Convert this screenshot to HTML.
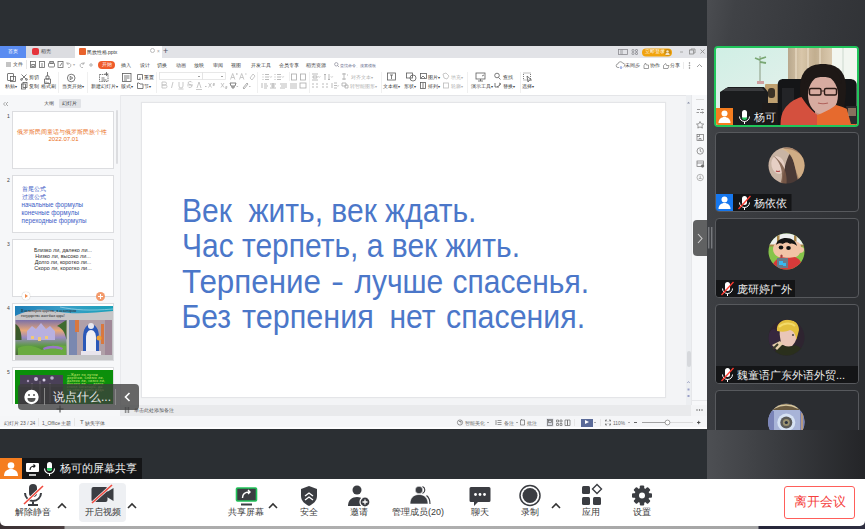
<!DOCTYPE html>
<html><head><meta charset="utf-8">
<style>
*{margin:0;padding:0;box-sizing:border-box}
html,body{width:865px;height:529px;overflow:hidden;background:#2b2f33;font-family:"Liberation Sans",sans-serif;position:relative}
.a{position:absolute}
.L{position:absolute;font-size:4.7px;line-height:7px;color:#3a3a3a;white-space:nowrap}
.G{color:#b0b0b0}
.sv{position:absolute;overflow:visible}
/* WPS window */
#wps{left:0;top:46px;width:707px;height:383px;background:#f3f4f6;overflow:hidden}
#tabs{left:0;top:0;width:707px;height:11.5px;background:#e2e3e7}
#qrow{left:0;top:11.5px;width:707px;height:12.5px;background:#fff}
#ribbon{left:0;top:24px;width:707px;height:25.5px;background:#fff;border-bottom:1px solid #e4e5e8}
#leftp{left:0;top:49px;width:121px;height:321px;background:#f6f7f9;border-right:1px solid #e8e9ec;overflow:hidden}
#thumbs{left:0;top:0;width:120px;height:309px;overflow:hidden}
.thumb{position:absolute;left:12px;width:102px;height:58px;background:#fff;border:1px solid #dcdde0}
.tn{position:absolute;left:7px;font-size:5px;line-height:5px;color:#444}
#slide{left:142px;top:57px;width:522.5px;height:294px;background:#fff;box-shadow:0 0 1px 1px #e4e5e8}
#vscroll{left:686px;top:49px;width:5px;height:310px;background:#eceef1}
#rside{left:691px;top:49px;width:16px;height:310px;background:#f7f8fa;border-left:1px solid #e6e7ea}
#notes{left:121px;top:359px;width:570px;height:11px;background:#e9eaec}
#status{left:0;top:370px;width:707px;height:11px;background:#f5f6f8}
#wpsb{left:0;top:381px;width:707px;height:2px;background:#fdfdfe}
.sl{position:absolute;font-size:30px;line-height:30px;color:#4b77c9;white-space:pre;transform-origin:0 0}
.sep{position:absolute;width:1px;background:#e6e6e6}
/* right panel */
#rpanel{left:707px;top:0;width:158px;height:479px;background:linear-gradient(100deg,#4b4d51 0,#404246 12%,#35373b 50%,#2a2c2f 100%)}
.tile{position:absolute;left:8px;width:144px;height:80px;background:#2b2d31;border:1px solid #57595d;border-radius:4px;overflow:hidden}
.lbl{position:absolute;bottom:1px;height:17px;background:#141517;color:#fff;font-size:12px;line-height:17px;white-space:nowrap}
/* bottom */
#shareLbl{left:0;top:458px;width:142px;height:21px;background:#141517}
#toolbar{left:0;top:479px;width:865px;height:46.5px;background:#fff;border-radius:0 0 5px 5px}
#bstrip{left:0;top:515px;width:865px;height:14px;background:linear-gradient(90deg,#3b3133 0,#4a3e40 64px,#a9a9a9 65px,#b0b0b0 400px,#a4a4a4 758px,#26263a 759px,#2e2e40 865px)}
.tbl{position:absolute;top:506px;font-size:9px;line-height:12px;color:#3a3a3a;white-space:nowrap;text-align:center}
</style></head><body>

<div id="wps" class="a">
  <!-- tab bar -->
  <div id="tabs" class="a">
    <div class="a" style="left:0;top:0;width:26px;height:11.5px;background:#5a8cf1"></div>
    <div class="L" style="left:8px;top:2px;color:#fff">首页</div>
    <div class="a" style="left:26px;top:0;width:49px;height:11.5px;background:#dcdde1"></div>
    <div class="a" style="left:32px;top:2px;width:7px;height:7px;border-radius:2px;background:#e5343b"></div>
    <div class="L" style="left:41px;top:2px">稻壳</div>
    <div class="a" style="left:75px;top:0;width:87px;height:11.5px;background:#fff"></div>
    <div class="a" style="left:79px;top:2px;width:7px;height:7px;border-radius:1px;background:#e8622c"></div>
    <div class="L" style="left:86.5px;top:2.5px;color:#333;font-size:5px">民族性格.pptx</div>
    <div class="a" style="left:150px;top:2px;width:5px;height:5px;border:1px solid #bbb;border-radius:50%"></div>
    <div class="L" style="left:157px;top:2px;color:#999">×</div>
    <div class="L" style="left:163px;top:1px;font-size:9px;line-height:9px;color:#556">+</div>
    <!-- right side of tab bar -->
    <svg class="sv" style="left:610px;top:0" width="97" height="11" viewBox="0 0 97 11" fill="none" stroke="#8a8a90" stroke-width="0.8">
      <rect x="8.5" y="3.5" width="9" height="5"/><path d="M12 3.5v5M10 5h1M10 7h1" />
      <rect x="22" y="3.5" width="2" height="2" rx="0.5"/><rect x="25.5" y="3.5" width="2" height="2" rx="0.5"/><rect x="22" y="6.5" width="2" height="2" rx="0.5"/><rect x="25.5" y="6.5" width="2" height="2" rx="0.5"/>
      <rect x="32" y="2.4" width="30" height="8" rx="4" fill="#f1a30c" stroke="none"/>
      <circle cx="57.5" cy="6.4" r="3.3" fill="#c98a12" stroke="none"/>
      <circle cx="57.5" cy="5.4" r="1.2" fill="#f4e6c8" stroke="none"/>
      <path d="M55.3 9c0-1.5 1-2.2 2.2-2.2s2.2 0.7 2.2 2.2z" fill="#f4e6c8" stroke="none"/>
      <path d="M70 6h3" stroke="#999"/>
      <rect x="79.5" y="4" width="4" height="4" stroke="#888"/><path d="M81 4v-1h4v4h-1" stroke="#888"/>
      <path d="M90.5 3.5l4 4M94.5 3.5l-4 4" stroke="#888"/>
    </svg>
    <div class="L" style="left:645px;top:2.5px;color:#fff;font-size:4.8px;line-height:6px">立即登录</div>
  </div>
  <!-- quick row -->
  <div id="qrow" class="a">
    <div class="a" style="left:6px;top:4px;width:5px;height:5px;background:#c4c4c4"></div>
    <div class="L" style="left:13px;top:3px;color:#333">文件</div>
    <div class="sep" style="left:26px;top:2px;height:9px"></div>
    <svg class="sv" style="left:30px;top:3px" width="65" height="8" viewBox="0 0 65 8" fill="none" stroke="#666" stroke-width="0.8">
      <rect x="0.5" y="0.5" width="5" height="6"/><rect x="1.8" y="3.5" width="2.5" height="2"/>
      <rect x="9.5" y="0.5" width="5" height="6"/><path d="M11 3h2M11 5h2"/>
      <rect x="18.5" y="2" width="6" height="4" rx="1"/><rect x="19.8" y="0.5" width="3.5" height="2"/>
      <rect x="28" y="0.5" width="5" height="6"/><path d="M30 5l2-3"/>
      <path d="M37 3a2.2 2.2 0 1 1 1 3.5M37 1v2h2" stroke="#aaa"/>
      <path d="M54 3a2.2 2.2 0 1 0 -1 3.5M54 1v2h-2" stroke="#aaa"/>
      <circle cx="61" cy="4" r="1.2" stroke="#999"/>
    </svg>
    <div class="L G" style="left:73px;top:3px;font-size:4px">▾</div>
    <div class="a" style="left:98px;top:3.5px;width:16.5px;height:7.5px;border-radius:4px;background:#ef5b2a"></div>
    <div class="L" style="left:101.5px;top:3.5px;color:#fff">开始</div>
    <div class="L" style="left:120.5px;top:4px">插入</div>
    <div class="L" style="left:139.5px;top:4px">设计</div>
    <div class="L" style="left:157px;top:4px">切换</div>
    <div class="L" style="left:176px;top:4px">动画</div>
    <div class="L" style="left:194px;top:4px">放映</div>
    <div class="L" style="left:212.5px;top:4px">审阅</div>
    <div class="L" style="left:231px;top:4px">视图</div>
    <div class="L" style="left:250.5px;top:4px">开发工具</div>
    <div class="L" style="left:279px;top:4px">会员专享</div>
    <div class="L" style="left:305.5px;top:4px">稻壳资源</div>
    <svg class="sv" style="left:333.5px;top:4.5px" width="6" height="6"><circle cx="2.3" cy="2.3" r="1.7" stroke="#778" stroke-width="0.6" fill="none"/><path d="M3.5 3.5l1.5 1.5" stroke="#778" stroke-width="0.6"/></svg>
    <div class="L" style="left:340px;top:4px;color:#6a7090;font-size:4.4px">查找命令、搜索模板</div>
    <svg class="sv" style="left:615px;top:2px" width="92" height="10" viewBox="0 0 92 10" fill="none" stroke="#777" stroke-width="0.7">
      <path d="M4 7.5h-1a1.8 1.8 0 0 1 0-3.6a2.5 2.5 0 0 1 4.8-0.6a1.8 1.8 0 0 1 0.8 3.5"/><path d="M6 6v2.5M5 7.5l1 1l1-1" stroke="#4a6ad0"/>
      <path d="M29 8.5v-3l1.5-2.5l0.8 2h2.2v3.5z"/>
      <path d="M48.5 8.5h4.5l1-3h-2.5l-0.8-2l-2.2 2z"/>
      <path d="M68.5 2v7" stroke="#e2e2e2"/>
      <circle cx="74.5" cy="3" r="0.45"/><circle cx="74.5" cy="5.5" r="0.45"/><circle cx="74.5" cy="8" r="0.45"/>
      <path d="M82 7l2.5-2.5l2.5 2.5"/>
    </svg>
    <div class="L" style="left:624.5px;top:4px;font-size:4.8px">未同步</div>
    <div class="L" style="left:650px;top:4px;font-size:4.8px">协作</div>
    <div class="L" style="left:670px;top:4px;font-size:4.8px">分享</div>
  </div>
  <!-- ribbon -->
  <div id="ribbon" class="a">
    <svg class="sv" style="left:0;top:0" width="707" height="25" viewBox="0 0 707 25" fill="none" stroke="#5c5c5c" stroke-width="0.8">
      <!-- paste -->
      <rect x="7.5" y="3.5" width="6" height="7" rx="0.5"/><rect x="10.5" y="6.5" width="5" height="5"/>
      <!-- cut/copy -->
      <path d="M21.5 4.5l5 5M26.5 4.5l-5 5"/><circle cx="21.5" cy="9.5" r="0.9"/><circle cx="26.5" cy="9.5" r="0.9"/><rect x="21.5" y="14" width="4" height="5"/><rect x="23" y="12.5" width="4" height="5"/>
      <!-- brush -->
      <path d="M47.5 2v4M46 6h3v3h-3zM44.5 9h6v4.5h-6zM46 13.5v-2M48 13.5v-1.5"/>
      <!-- play -->
      <circle cx="71.2" cy="8" r="3.8"/><path d="M70.2 6.3v3.4l2.6-1.7z"/>
      <!-- new slide -->
      <rect x="99.5" y="4.5" width="8.5" height="7" stroke-dasharray="1.5 0.8"/><path d="M101.5 8h3M101.5 10h5M106.5 2v4M104.5 4h4"/>
      <!-- layout -->
      <rect x="122.5" y="3.5" width="8.5" height="8"/><path d="M124 6h5.5M124 8h5.5M124 10h3"/>
      <path d="M137.5 4.5h5v5M137.5 4.5v5h3M140 7.5v2"/><path d="M137.5 14v4.5h5.5v-4.5h-3l-1-1h-1.5z"/>
      <!-- font boxes -->
      <rect x="159.5" y="2.5" width="43" height="7" stroke="#e3e3e3"/>
      <rect x="202.5" y="2.5" width="23" height="7" stroke="#e3e3e3"/>
      <path d="M198 6l1 1l1-1M221 6l1 1l1-1" stroke="#888"/>
      <!-- font row2 -->
      <g stroke="#bbb"><path d="M162 12h3a1.3 1.3 0 0 1 0 3h-3zM162 15h3.5a1.5 1.5 0 0 1 0 3h-3.5z"/>
      <path d="M173 12l-1.5 6"/><path d="M179 12v4a2 2 0 0 0 4 0v-4M178.5 19h5"/>
      <path d="M192 12.5a2 1.5 0 1 0-2 2a2 1.5 0 1 1-2 2M187 15h6"/>
      <path d="M197 18l2-6l2 6M196 19.5h6"/>
      <path d="M208.5 13l3 4.5M211.5 13l-3 4.5M213 13.5h1.5v1h-1.5v1h1.5M221 13l3 4.5M224 13l-3 4.5M225.5 16.5h1.5v1h-1.5v1h1.5"/>
      <path d="M230.5 9.5l2.2-6l2.2 6M231.3 7.5h2.8M236 4h1.6M236.8 3.2v1.6M239.5 9.5l2.2-6l2.2 6M240.3 7.5h2.8M245 4h1.6"/>
      <path d="M250 8l3-4l2 2l-3 4z"/></g>
      <path d="M230 13h6l-1 3h-4zM232 16v2h2v-2" stroke="#666"/>
      <path d="M243 18l4-5l1 1l-4 5z" stroke="#999"/>
      <!-- separators -->
      <g stroke="#ececec"><path d="M58.5 2v21M87.5 2v21M156.5 2v21M257.5 2v21M289.5 2v9M309.5 2v21M381.5 2v21M467.5 2v21M520.5 2v21"/></g>
      <!-- lists -->
      <g stroke="#aaa"><path d="M263 4v1M263 6.5v1M263 9v1M265 4.5h4M265 7h4M265 9.5h4M270 6.5l0.8 0.8l0.8-0.8M282 6.5l0.8 0.8l0.8-0.8M318.5 6.5l0.8 0.8l0.8-0.8M331 6.5l0.8 0.8l0.8-0.8M337 15.5l0.8 0.8l0.8-0.8M205 16l0.8 0.8l0.8-0.8M236.5 16l0.8 0.8l0.8-0.8M249 16l0.8 0.8l0.8-0.8"/>
      <path d="M275 4v1M275 6.5v1M275 9v1M277 4.5h4M277 7h4M277 9.5h4"/>
      <rect x="291.5" y="4" width="5" height="6"/><rect x="300.5" y="4" width="5" height="6"/>
      <path d="M262 13v5M264 14h3M264 16h4M264 18h3"/>
      <path d="M273 13v5M270 14h6M271 16h4M270 18h6"/>
      <path d="M286 13v5M280 14h5M281 16h4M280 18h5"/>
      <path d="M290 14h7M290 16h7M290 18h7"/>
      <rect x="300" y="13" width="6" height="5"/>
      <path d="M312 4h6M312 10h6M313 6h4v2h-4z"/>
      <path d="M325 4v6M329 4v6M324 5l1-1l1 1M328 9l1 1l1-1"/>
      <path d="M312 14h2M316 14h2M312 17h2M316 17h2M322 14h2M326 14h2M322 17h2M326 17h2"/>
      <path d="M332 13v5M334 13h3M334 15.5h3M334 18h3"/>
      <path d="M344 3v7M342 4h4M342 9h4M347 5h1"/>
      <path d="M342 13h4v3h-4zM345 15h3v3h-3z"/></g>
      <!-- insert group -->
      <rect x="387.5" y="3" width="8" height="7"/><path d="M390 5h3M391.5 5v4"/>
      <rect x="406.5" y="3" width="6" height="5"/><circle cx="413" cy="8" r="3"/>
      <rect x="420.5" y="3.5" width="6" height="5"/><path d="M421 8l2-2l2 2"/>
      <rect x="420.5" y="12.5" width="5" height="6"/><path d="M423 13v5"/>
      <g stroke="#bbb"><path d="M443 4l3-1l3 3l-2 3l-3-1z"/><rect x="443.5" y="13" width="5" height="5"/></g>
      <rect x="476" y="3" width="9" height="6"/><path d="M480.5 9v2M478 11h5M482 6l2-1"/>
      <circle cx="497" cy="5.5" r="2.3"/><path d="M498.5 7.5l2 2"/>
      <path d="M495 13v4h4M499 13l2 1l-2 1M497 17l3-2"/>
      <rect x="523.5" y="3" width="7" height="7" stroke-dasharray="1 1"/><path d="M527 6l1 6l1.5-2l2 0z"/>
    </svg>
    <div class="L" style="left:5px;top:12.5px">粘贴<span style="font-size:4px">▾</span></div>
    <div class="L" style="left:28.5px;top:3.5px">剪切</div>
    <div class="L" style="left:28.5px;top:12.5px">复制</div>
    <div class="L" style="left:41px;top:12.5px">格式刷</div>
    <div class="L" style="left:62px;top:12.5px">当页开始<span style="font-size:4px">▾</span></div>
    <div class="L" style="left:91px;top:12.5px">新建幻灯片<span style="font-size:4px">▾</span></div>
    <div class="L" style="left:121px;top:12.5px">版式<span style="font-size:4px">▾</span></div>
    <div class="L" style="left:144px;top:4px">重置</div>
    <div class="L" style="left:144px;top:12.5px">节<span style="font-size:4px">▾</span></div>
    <div class="L G" style="left:351px;top:4px">对齐文本<span style="font-size:4px">▾</span></div>
    <div class="L G" style="left:350px;top:12.5px">转智能图形<span style="font-size:4px">▾</span></div>
    <div class="L" style="left:383px;top:12.5px">文本框<span style="font-size:4px">▾</span></div>
    <div class="L" style="left:404px;top:12.5px">形状<span style="font-size:4px">▾</span></div>
    <div class="L" style="left:428px;top:4px">图片<span style="font-size:4px">▾</span></div>
    <div class="L" style="left:428px;top:12.5px">排列<span style="font-size:4px">▾</span></div>
    <div class="L G" style="left:451px;top:4px">填充<span style="font-size:4px">▾</span></div>
    <div class="L G" style="left:451px;top:12.5px">轮廓<span style="font-size:4px">▾</span></div>
    <div class="L" style="left:471px;top:12.5px">演示工具<span style="font-size:4px">▾</span></div>
    <div class="L" style="left:503px;top:4px">查找</div>
    <div class="L" style="left:503px;top:12.5px">替换<span style="font-size:4px">▾</span></div>
    <div class="L" style="left:522px;top:12.5px">选择<span style="font-size:4px">▾</span></div>
  </div>
  <!-- left panel -->
  <div id="leftp" class="a">
    <svg class="sv" style="left:2px;top:6px" width="7" height="6"><path d="M3.5 1l-2 2l2 2M6 1l-2 2l2 2" stroke="#888" stroke-width="0.7" fill="none"/></svg>
    <div class="L" style="left:44px;top:5px;color:#555">大纲</div>
    <div class="a" style="left:59px;top:4px;width:22px;height:9px;background:#e1e3e7;border-radius:1px"></div>
    <div class="L" style="left:62px;top:5px;color:#333">幻灯片</div>
    <div class="a" style="left:116px;top:15px;width:2px;height:54px;background:#dcdde0;border-radius:1px"></div>
    <svg class="sv" style="left:56px;top:310px" width="8" height="8"><path d="M4 0.5v7M0.5 4h7" stroke="#3a3a3a" stroke-width="1"/></svg>
    <div id="thumbs" class="a">
    <div class="tn" style="top:19px">1</div>
    <div class="thumb" style="top:16px">
      <div class="L" style="left:3.8px;top:16px;color:#ea6e22;font-size:6.25px;font-weight:500">俄罗斯民间童话与俄罗斯民族个性</div>
      <div class="L" style="left:35.5px;top:23.5px;color:#ea6e22;font-size:6px">2022.07.01</div>
    </div>
    <div class="tn" style="top:83px">2</div>
    <div class="thumb" style="top:80px">
      <div class="L" style="left:8.5px;top:9px;color:#3d5cc6;font-size:6.3px;line-height:8px">首尾公式<br>过渡公式<br>начальные формулы<br>конечные формулы<br>переходные формулы</div>
    </div>
    <div class="tn" style="top:147px">3</div>
    <div class="thumb" style="top:144px">
      <div class="L" style="left:0;width:100px;text-align:center;top:6.5px;color:#2a2a2a;font-size:5.4px;line-height:6.05px">Близко ли, далеко ли...<br>Низко ли, высоко ли...<br>Долго ли, коротко ли...<br>Скоро ли, коротко ли...</div>
      <div class="a" style="left:8.5px;top:52px;width:8px;height:8px;border-radius:50%;background:#fff;box-shadow:0 0 1px #aaa"></div>
      <div class="a" style="left:11.5px;top:54px;width:0;height:0;border-left:3.5px solid #f08a4b;border-top:2px solid transparent;border-bottom:2px solid transparent"></div>
      <div class="a" style="left:82.5px;top:52px;width:9px;height:9px;border-radius:50%;background:#f39a6b"></div>
      <svg class="sv" style="left:82.5px;top:52px" width="9" height="9"><path d="M4.5 2v5M2 4.5h5" stroke="#fff" stroke-width="1.1"/></svg>
    </div>
    <div class="tn" style="top:211px">4</div>
    <div class="thumb" style="top:208px;background:#fff;overflow:hidden">
      <svg class="sv" style="left:1.5px;top:1.5px" width="98" height="55" viewBox="0 0 98 55">
        <defs>
          <linearGradient id="wave4" x1="0" y1="0" x2="1" y2="0"><stop offset="0" stop-color="#1e7fb8"/><stop offset="0.5" stop-color="#3a9fc8"/><stop offset="1" stop-color="#18a0b8"/></linearGradient>
          <linearGradient id="sky4" x1="0" y1="0" x2="0" y2="1"><stop offset="0" stop-color="#7a70a8"/><stop offset="0.3" stop-color="#e8a878"/><stop offset="0.5" stop-color="#9a8ac0"/><stop offset="0.75" stop-color="#5a9a40"/><stop offset="1" stop-color="#4a6a38"/></linearGradient>
        </defs>
        <rect width="98" height="55" fill="#c6c6c8"/>
        <path d="M0 0h98v5c-20 2-40 4-60 0c-15-3-28 0-38 5z" fill="url(#wave4)"/>
        <path d="M45 1c15 3 30 4 53 2" stroke="#b8e0f0" stroke-width="0.6" fill="none"/>
        <rect x="0.5" y="14" width="51" height="35" fill="url(#sky4)"/>
        <path d="M12 34v-9l5-5l4 3l5-6l5 6l4-3l5 5v9z" fill="#b8b0e0"/>
        <path d="M16 30h3v3h-3zM30 30h3v3h-3zM23 31h3v4h-3z" fill="#f0c878"/>
        <path d="M0.5 18c4 2 6 8 6 16h-6z" fill="#3a5a2a"/>
        <path d="M42 20c5 2 8 6 9.5 14v-20z" fill="#3f6a30"/>
        <path d="M3 42c8-4 18-2 24 2c6-4 14-6 24-4v9h-48z" fill="#6aaa40"/>
        <path d="M28 42c6-3 14-3 20 0l-1 2c-5-2-13-2-18 0z" fill="#9a78c8"/>
        <rect x="54" y="14" width="43" height="35" fill="#b0a0a8"/>
        <path d="M54 14h8v35h-8z" fill="#7a88b0"/>
        <path d="M90 14h7v35h-7z" fill="#a08898"/>
        <path d="M60 14h4v12h-4zM86 18h3v20h-3z" fill="#d87840"/>
        <path d="M68 49v-18c0-8 4-13 8-13s8 5 8 13v18z" fill="#2a58b8"/>
        <path d="M71 46v-14c0-5 2-8 5-8s5 3 5 8v14z" fill="#f0f0f4"/>
        <circle cx="76" cy="20" r="3" fill="#e8e8f0"/>
        <circle cx="84" cy="32" r="2.5" fill="#f0a030"/>
        <path d="M66 45h20v4h-20z" fill="#e8e4ec"/>
      </svg>
      <div class="L" style="left:8px;top:5px;color:#222;font-size:3.8px;line-height:4.5px;font-family:'Liberation Serif',serif">В некотором царстве, в некотором<br>государстве жил-был царь!</div>
    </div>
    <div class="tn" style="top:275px">5</div>
    <div class="thumb" style="top:272px;background:#fff;overflow:hidden">
      <div class="a" style="left:1.5px;top:1.5px;width:98px;height:54px;background:#0b8f0b"></div>
      <svg class="sv" style="left:6.5px;top:6.5px" width="43" height="40" viewBox="0 0 43 40">
        <rect width="43" height="40" fill="#3a3440"/>
        <path d="M0 0h43v12h-43z" fill="#4a4058"/>
        <circle cx="16" cy="4" r="2" fill="#c8c0d8"/><circle cx="24" cy="5" r="1.5" fill="#d8d0e8"/><circle cx="32" cy="3" r="1.8" fill="#b8b0c8"/><circle cx="8" cy="6" r="1.2" fill="#a898b8"/>
        <path d="M12 8v20M20 6v26M30 8v22" stroke="#6a6070" stroke-width="1.5"/>
        <rect y="28" width="43" height="12" fill="#2a2630"/>
      </svg>
      <div class="L" style="left:54px;top:5.5px;color:#d8f07a;font-size:3.4px;line-height:3px;letter-spacing:0.3px">—Ждет по путям<br>дорогам, близко ли,<br>далеко ли, низко ли,<br>высоко ли. — долго<br>стоял богатырь, да<br>на нём и думы деда</div>
    </div>
    </div>
  </div>
  <!-- slide -->
  <div id="slide" class="a">
    <div class="sl" style="left:40px;top:91.3px;transform:scaleY(1.1)">Век  жить, век ждать.</div>
    <div class="sl" style="left:40px;top:126.3px;transform:scaleY(1.1)">Час терпеть, а век жить.</div>
    <div class="sl" style="left:39.6px;top:161.5px;transform:scale(1.046,1.1)">Терпение</div>
    <div class="sl" style="left:188.6px;top:161.5px;transform:scale(1.3,1.1)">-</div>
    <div class="sl" style="left:212.4px;top:161.5px;transform:scaleY(1.1)">лучше</div>
    <div class="sl" style="left:310.6px;top:161.5px;transform:scaleY(1.1)">спасенья.</div>
    <div class="sl" style="left:39.6px;top:196.7px;transform:scaleY(1.1)">Без</div>
    <div class="sl" style="left:99.6px;top:196.7px;transform:scale(1.02,1.1)">терпения</div>
    <div class="sl" style="left:247.4px;top:196.7px;transform:scaleY(1.1)">нет</div>
    <div class="sl" style="left:303.6px;top:196.7px;transform:scale(1.012,1.1)">спасения.</div>
  </div>
  <div id="vscroll" class="a">
    <svg class="sv" style="left:0;top:0" width="5" height="12"><path d="M1 8.5l1.5-1.8l1.5 1.8z" fill="#8a8fa8"/></svg>
    <div class="a" style="left:0.5px;top:256px;width:4px;height:16px;background:#d6d8dc;border-radius:2px"></div>
    <svg class="sv" style="left:0;top:284px" width="5" height="20"><path d="M1.2 4l1.3-1.5l1.3 1.5" stroke="#8a90b8" stroke-width="0.7" fill="none"/><path d="M1.5 9.5h2v2h-2z" fill="#9aa0c8"/><path d="M1.5 16h2v2h-2z" fill="#9aa0c8"/></svg>
  </div>
  <div id="rside" class="a">
    <svg class="sv" style="left:0;top:0" width="16" height="310" viewBox="0 0 16 310" fill="none" stroke="#707070" stroke-width="0.7">
      <path d="M4 4.5h8" stroke="#dcdcdc" stroke-width="1"/>
      <path d="M5 14.5h3M9 14.5h2.5M4.5 17.5h2.5M8 17.5h3.5M10.5 16.5l1 1l-1 1"/>
      <path d="M8 26.5l1.3 2.3l2.4 0.3l-1.8 1.6l0.5 2.4l-2.4-1.2l-2.2 1.2l0.4-2.4l-1.7-1.6l2.4-0.3z"/>
      <rect x="5" y="39.5" width="6.5" height="6" /><path d="M5 41.5h2.5v-2"/><path d="M7 45.5v-2h2v2"/>
      <circle cx="8.2" cy="56" r="3.2"/><path d="M8.2 54v2.2l1.4 0.8"/>
      <rect x="5" y="66" width="6.5" height="5.5"/><path d="M5 68h6.5"/><circle cx="10.5" cy="71" r="1.3" fill="#707070"/>
      <circle cx="8.2" cy="82.5" r="3.2" stroke="#999"/><path d="M8.2 80.5v3M6.8 83.5h2.8" stroke="#999"/>
    </svg>
    <div class="a" style="left:0;top:305px;width:16px;height:1px;background:#e6e7ea"></div>
  </div>
  <!-- notes -->
  <div id="notes" class="a">
    <svg class="sv" style="left:3px;top:2px" width="7" height="7"><path d="M0.5 1h5M0.5 3h5M0.5 5h5M1.5 0v6M4.5 0v6" stroke="#666" stroke-width="0.6"/></svg>
    <div class="L" style="left:12.5px;top:2px;color:#555">单击此处添加备注</div>
  </div>
  <svg class="sv" style="left:695px;top:362px" width="10" height="4" viewBox="0 0 10 4"><circle cx="2" cy="2" r="0.7" fill="#555"/><circle cx="4.5" cy="2" r="0.7" fill="#555"/><circle cx="7" cy="2" r="0.7" fill="#555"/></svg>
  <!-- status bar -->
  <div id="status" class="a">
    <div class="L" style="left:4px;top:3.5px;color:#555;font-size:4.9px">幻灯片 23 / 24</div>
    <div class="sep" style="left:38px;top:2px;height:8px"></div>
    <div class="L" style="left:42px;top:3.5px;color:#555;font-size:4.9px">1_Office 主题</div>
    <div class="sep" style="left:74px;top:2px;height:8px"></div>
    <div class="L" style="left:80px;top:3px;color:#555;font-size:6px">T</div>
    <div class="L" style="left:85px;top:3.5px;color:#555;font-size:4.9px">缺失字体</div>
    <svg class="sv" style="left:0;top:0" width="707" height="12" viewBox="0 0 707 12" fill="none" stroke="#6a6a6a" stroke-width="0.7">
      <circle cx="460" cy="6.5" r="2.6"/><path d="M459 5.5h2v2"/>
      <path d="M487 6l1 1l1-1" stroke="#888"/>
      <path d="M497.5 4.5h4M497.5 6.5h4M497.5 8.5h4M496 4v5"/>
      <path d="M516 6l1 1l1-1" stroke="#888"/>
      <path d="M520.5 4h4v5h-4z"/><path d="M521.5 3v1"/>
      <rect x="546.5" y="2.5" width="7" height="8" fill="#d9dce4" stroke="none"/>
      <rect x="547.5" y="3.5" width="5" height="6"/><rect x="548.5" y="4.5" width="3" height="2"/>
      <path d="M556.5 4h2v2h-2zM560 4h2v2h-2zM556.5 7.5h2v2h-2zM560 7.5h2v2h-2z"/>
      <path d="M565 4h2.5v5.5h-2.5zM567.5 4h2.5v5.5h-2.5z"/>
      <path d="M574.5 3v7" stroke="#e0e0e0"/>
      <path d="M594 6l1 1l1-1" stroke="#888"/>
      <path d="M600.5 3v7" stroke="#e0e0e0"/>
      <path d="M605.5 4l1.5 1.5M610.5 4l-1.5 1.5M605.5 9l1.5-1.5M610.5 9l-1.5-1.5M605.5 4h1.5M605.5 4v1.5M610.5 4h-1.5M610.5 4v1.5M605.5 9h1.5M605.5 9v-1.5M610.5 9h-1.5M610.5 9v-1.5"/>
      <path d="M628 6l1 1l1-1" stroke="#888"/>
      <path d="M634 6.5h3" stroke="#555" stroke-width="0.9"/>
      <path d="M642 6.5h51" stroke="#d0d0d0"/>
      <path d="M642 6.5h23" stroke="#8a8a8a"/>
      <circle cx="667.5" cy="6.5" r="2.4" fill="#fff" stroke="#777"/>
      <path d="M697 6.5h3.4M698.7 4.8v3.4" stroke="#444" stroke-width="0.9"/>
    </svg>
    <div class="L" style="left:465px;top:3.5px;color:#666;font-size:4.8px">智能美化</div>
    <div class="L" style="left:503.5px;top:3.5px;color:#666;font-size:4.8px">备注</div>
    <div class="L" style="left:526.5px;top:3.5px;color:#666;font-size:4.8px">批注</div>
    <div class="a" style="left:581px;top:2.5px;width:11.5px;height:8.5px;background:#5a6a98"></div>
    <div class="a" style="left:585px;top:4.3px;width:0;height:0;border-left:4.5px solid #fff;border-top:2.5px solid transparent;border-bottom:2.5px solid transparent"></div>
    <div class="L" style="left:613px;top:3.5px;color:#666;font-size:4.8px">110%</div>
  </div>
  <div id="wpsb" class="a"></div>
</div>

<div id="rpanel" class="a">
  <!-- tile 1 video -->
  <div class="tile" style="left:7px;top:46px;width:145px;height:81px;border:2px solid #20c55b;background:#d3e9e4">
    <svg class="sv" style="left:0;top:0" width="141" height="77" viewBox="0 0 141 77">
      <defs>
        <linearGradient id="wall" x1="0" y1="0" x2="1" y2="1"><stop offset="0" stop-color="#d0efe5"/><stop offset="0.5" stop-color="#e0f0ea"/><stop offset="1" stop-color="#dfeae4"/></linearGradient>
        <linearGradient id="curt" x1="0" y1="0" x2="1" y2="0"><stop offset="0" stop-color="#b8a78c"/><stop offset="0.3" stop-color="#d9c7aa"/><stop offset="0.6" stop-color="#c2ae90"/><stop offset="1" stop-color="#dccbb0"/></linearGradient>
      </defs>
      <rect x="0" y="0" width="141" height="77" fill="url(#wall)"/>
      <rect x="72" y="0" width="45" height="34" fill="url(#curt)"/>
      <path d="M80 0v34M92 0v34M104 0v34" stroke="#e6d8c0" stroke-width="2" opacity="0.7"/>
      <rect x="116" y="0" width="25" height="40" fill="#f2f6f0"/>
      <path d="M127 0v40" stroke="#d8e2da" stroke-width="1.5"/>
      <path d="M44 34v-26" stroke="#8a9a80" stroke-width="1"/>
      <path d="M44 12l-5-2M44 11l6-2M44 14l6 1" stroke="#7aa874" stroke-width="1.8"/>
      <rect x="41" y="33" width="7" height="3" fill="#d0a0a0"/>
      <rect x="49" y="36" width="13" height="19" fill="#bfa070" rx="1"/>
      <rect x="52" y="40" width="7" height="10" fill="#3b3226" rx="3"/>
      <path d="M4 44l8-5h36l4 5v33h-48z" fill="#1b1c1e"/>
      <path d="M10 40h36l3 3h-42z" fill="#3a3b3e"/>
      <path d="M46 55h18v22h-18z" fill="#1c1a1a"/>
      <path d="M61.7 77v-40c0-4 2-6 6-6h66c4 0 7 2 7 6v40z" fill="#141517"/>
      <path d="M66 40h12v28h-12z" fill="#232427"/>
      <path d="M84 40c0-16 8-24 23-24s23 8 23 24c0 8-1 14-2 20h-42c-1-6-2-12-2-20z" fill="#1e1816"/>
      <rect x="99" y="56" width="18" height="14" fill="#c49080"/>
      <ellipse cx="107" cy="47" rx="15" ry="19.5" fill="#d7aba0"/>
      <path d="M88 36c2-12 10-18 19-18s17 6 19 18c-6-5-12-7-19-7s-14 2-19 7z" fill="#1e1816"/>
      <rect x="93.5" y="40.5" width="11.5" height="6.5" fill="none" stroke="#2a1a15" stroke-width="1.4" rx="1.5"/>
      <rect x="108.5" y="40.5" width="12" height="6.5" fill="none" stroke="#2a1a15" stroke-width="1.4" rx="1.5"/>
      <path d="M105 43h3.5" stroke="#3a2a25" stroke-width="1"/>
      <path d="M102 55q5 1.5 10 0" stroke="#b0625c" stroke-width="1.2" fill="none"/>
      <path d="M64.5 77c0-6 1-12 4-16c4-6 10-10 17-12c4 6 8 12 16 18v10z" fill="#d4503e"/>
      <path d="M101 77v-10c6-2 14-6 19-10c8 2 15 5 21 10v10z" fill="#e66a2e"/>
      <path d="M130 58l11 0v18h-6z" fill="#2a2a2c"/>
      <path d="M132 60h8v8h-8z" fill="#c7a080" opacity="0.6"/>
      <rect x="0" y="60" width="17" height="17" fill="#f57d1f"/>
      <circle cx="8.5" cy="65.5" r="3" fill="#fff"/>
      <path d="M2.5 75c0-4 3-6 6-6s6 2 6 6z" fill="#fff"/>
      <rect x="26" y="62" width="5" height="9" rx="2.5" fill="#fff"/>
      <path d="M26 69.5h5v0a2.5 2.5 0 0 1-5 0z" fill="#22c35a"/>
      <path d="M23.5 68.5a5 5 0 0 0 10 0M28.5 73.5v2.5" stroke="#fff" stroke-width="1" fill="none"/>
    </svg>
    <div class="a" style="left:38px;top:61.5px;color:#f0f0f0;font-size:11px;line-height:15px;font-weight:500;text-shadow:0 0 2px #000">杨可</div>
  </div>
  <!-- tile 2 -->
  <div class="tile" style="top:132px">
    <svg class="sv" style="left:0;top:0" width="142" height="78" viewBox="0 0 142 78">
      <defs>
        <clipPath id="c2"><circle cx="70.5" cy="32.5" r="18"/></clipPath>
        <linearGradient id="hair2" x1="0" y1="0" x2="1" y2="1"><stop offset="0" stop-color="#e8c9a5"/><stop offset="0.45" stop-color="#9a7250"/><stop offset="1" stop-color="#3a2a25"/></linearGradient>
      </defs>
      <g clip-path="url(#c2)">
        <rect x="50" y="12" width="42" height="42" fill="#4a3a36"/>
        <path d="M50 12h30c-6 6-12 16-14 42h-16z" fill="#c9b4a4"/>
        <path d="M54 14c10-2 18 2 22 10c4 10 4 20 8 30h8v-42z" fill="#a88468"/>
        <path d="M62 16c8 0 14 6 16 14c2 8 4 16 10 24h4v-20c-4-12-12-20-30-18z" fill="#d9b88c" opacity="0.8"/>
        <ellipse cx="62" cy="32" rx="6.5" ry="9" fill="#e6cfc4" transform="rotate(-15 62 32)"/>
        <path d="M56 22c6 4 10 12 10 20c0 6-2 10-4 12h8c2-10 0-24-14-32z" fill="#7a5a48" opacity="0.85"/>
        <path d="M50 44c6 0 10 4 12 10h-12z" fill="#5a4a48"/>
        <path d="M60 38q2 1 4 0" stroke="#b04848" stroke-width="1.2" fill="none"/>
      </g>
      <rect x="0" y="61" width="17" height="17" fill="#1677ee"/>
      <circle cx="8.5" cy="66.5" r="3" fill="#fff"/>
      <path d="M2.5 76c0-4 3-6 6-6s6 2 6 6z" fill="#fff"/>
      <rect x="17" y="61" width="58.5" height="17" fill="#141517"/>
      <rect x="26" y="63" width="5" height="9" rx="2.5" fill="#fff"/>
      <path d="M23.5 69.5a5 5 0 0 0 10 0M28.5 74.5v2.5" stroke="#fff" stroke-width="1" fill="none"/>
      <path d="M22.5 76l12-13" stroke="#ff3b30" stroke-width="1.3"/>
    </svg>
    <div class="a" style="left:38px;top:63px;color:#ececec;font-size:11px;line-height:15px;font-weight:500">杨依依</div>
  </div>
  <!-- tile 3 -->
  <div class="tile" style="top:218px">
    <svg class="sv" style="left:0;top:0" width="142" height="78" viewBox="0 0 142 78">
      <defs><clipPath id="c3"><circle cx="70.5" cy="32.5" r="18"/></clipPath></defs>
      <g clip-path="url(#c3)">
        <rect x="50" y="12" width="42" height="42" fill="#86c44a"/>
        <rect x="50" y="12" width="42" height="14" fill="#eef0f0"/>
        <path d="M50 25.5h42v2h-42z" fill="#a8864a"/>
        <path d="M61 14h2.5v12h-2.5zM78 14h2.5v12h-2.5z" fill="#a8864a"/>
        <path d="M57 30c0-6 6-9 14-9s14 2 14 7c2 0 3 1 3 3s-2 3-4 3c-2 4-7 6-13 6s-14-3-14-10z" fill="#f2c4a6"/>
        <path d="M60 26c1-5 5-7 10-7c6 0 10 3 11 8c-2-2-5-3-7-2c-2-2-5-2-7 0c-2-1-5-1-7 1z" fill="#141414"/>
        <ellipse cx="65" cy="28.5" rx="2.3" ry="2" fill="#111"/>
        <ellipse cx="72.5" cy="29" rx="2.3" ry="2" fill="#111"/>
        <path d="M55 54c0-8 4-14 10-16c4 1 10 1 14 0c5 2 8 6 8 16z" fill="#d83a3a"/>
        <rect x="61" y="39" width="11" height="10" fill="#6a7a88"/>
        <path d="M63 42h4v4h-4zM67 44h3v3h-3z" fill="#38b8f0"/>
        <ellipse cx="65.5" cy="37" rx="1.2" ry="1.5" fill="#a04040"/>
      </g>
      <rect x="0" y="61" width="79" height="17" fill="#141517"/>
      <rect x="9" y="63" width="5" height="9" rx="2.5" fill="#fff"/>
      <path d="M6.5 69.5a5 5 0 0 0 10 0M11.5 74.5v2.5" stroke="#fff" stroke-width="1" fill="none"/>
      <path d="M5.5 76l12-13" stroke="#ff3b30" stroke-width="1.3"/>
    </svg>
    <div class="a" style="left:21px;top:63px;color:#ececec;font-size:11px;line-height:15px;font-weight:500">庞研婷广外</div>
  </div>
  <!-- tile 4 -->
  <div class="tile" style="top:304px">
    <svg class="sv" style="left:0;top:0" width="142" height="78" viewBox="0 0 142 78">
      <defs><clipPath id="c4"><circle cx="70.5" cy="32.5" r="18"/></clipPath></defs>
      <g clip-path="url(#c4)">
        <rect x="50" y="12" width="42" height="42" fill="#2e2430"/>
        <ellipse cx="58" cy="34" rx="6" ry="10" fill="#3a2a44" opacity="0.7"/>
        <path d="M64 32c-1-6 0-12 6-13c6-1 11 3 11 9c0 6-2 10-5 13c-4 2-9 1-11-3z" fill="#e9c6b8"/>
        <path d="M61 26c-1-8 6-12 12-11c6 0 10 4 10 10c-1 4-2 8-3 10c0-5-2-9-6-10c-4 2-8 2-13 1z" fill="#e3c03e"/>
        <path d="M63 22c4-4 12-5 16-1" stroke="#f3da6a" stroke-width="2" fill="none"/>
        <path d="M57 54c0-6 4-12 10-14c4 2 8 2 12 0c6 2 10 6 10 14z" fill="#2a2f1c"/>
        <path d="M56 40l8-4l3 3l-6 6z" fill="#e6ceaa"/>
        <path d="M57 44l5-5" stroke="#3a3a2a" stroke-width="2"/>
        <circle cx="77" cy="30" r="1" fill="#444"/>
      </g>
      <rect x="0" y="61" width="142" height="17" fill="#141517"/>
      <rect x="9" y="63" width="5" height="9" rx="2.5" fill="#fff"/>
      <path d="M6.5 69.5a5 5 0 0 0 10 0M11.5 74.5v2.5" stroke="#fff" stroke-width="1" fill="none"/>
      <path d="M5.5 76l12-13" stroke="#ff3b30" stroke-width="1.3"/>
    </svg>
    <div class="a" style="left:21px;top:63px;color:#ececec;font-size:11px;line-height:15px;font-weight:500;white-space:nowrap">魏童语广东外语外贸...</div>
  </div>
  <!-- tile 5 -->
  <div class="tile" style="top:390px;height:80px">
    <svg class="sv" style="left:0;top:0" width="142" height="78" viewBox="0 0 142 78">
      <defs><clipPath id="c5"><circle cx="70.3" cy="31" r="18.2"/></clipPath></defs>
      <g clip-path="url(#c5)">
        <rect x="50" y="12" width="42" height="42" fill="#a8b4d8"/>
        <rect x="50" y="12" width="42" height="7" fill="#6a5a40"/>
        <path d="M58 17c8-4 16-4 24 0" stroke="#d8c8a0" stroke-width="1.5" fill="none"/>
        <path d="M50 20h8v34h-8zM84 20h8v34h-8z" fill="#7a84b8"/>
        <circle cx="70.3" cy="31.5" r="9" fill="#d6e2f4"/>
        <circle cx="70.3" cy="31.5" r="6" fill="#5a5a58"/>
        <circle cx="70.3" cy="31.5" r="3.5" fill="#9a9270"/>
        <circle cx="70.3" cy="31.5" r="1.6" fill="#2a3040"/>
        <path d="M86 22v30" stroke="#c8a070" stroke-width="1.5"/>
      </g>
    </svg>
  </div>
  <div class="a" style="left:0;top:430px;width:158px;height:49px;background:linear-gradient(90deg,#4d4f53 0,#3a3c40 45%,#242528 100%)"></div>
  <!-- collapse handle -->
</div>
<div class="a" style="left:693px;top:220px;width:14px;height:36px;background:#606162;border-radius:4px 0 0 4px"></div>
<svg class="sv" style="left:693px;top:220px" width="20" height="36" viewBox="0 0 20 36"><path d="M5 14l4 4.5l-4 4.5" stroke="#d0d0d0" stroke-width="1.1" fill="none"/><path d="M15.8 7v21.5M18.8 7v21.5" stroke="#909296" stroke-width="1"/></svg>

<!-- share label -->
<div id="shareLbl" class="a">
  <div class="a" style="left:0;top:0;width:22px;height:21px;background:#f57d1f"></div>
  <svg class="sv" style="left:0;top:0" width="142" height="21" viewBox="0 0 142 21">
    <circle cx="11" cy="7.5" r="3.3" fill="#fff"/>
    <path d="M4 18c0-5 3.5-7 7-7s7 2 7 7z" fill="#fff"/>
    <rect x="26" y="5" width="13" height="9" rx="1" fill="#fff"/>
    <path d="M29 17h7" stroke="#fff" stroke-width="1.5"/>
    <path d="M30 12c0-3 2-4 5-4M33.5 6.5l1.5 1.5l-1.5 1.5" stroke="#141517" stroke-width="1.1" fill="none"/>
    <rect x="47" y="4" width="5" height="9" rx="2.5" fill="#fff"/>
    <path d="M47 10h5v0.5a2.5 2.5 0 0 1-5 0z" fill="#22c35a"/>
    <path d="M44.5 10.5a5 5 0 0 0 10 0M49.5 15.5v2.5" stroke="#fff" stroke-width="1.1" fill="none"/>
  </svg>
  <div class="a" style="left:60px;top:3px;color:#f2f2f2;font-size:11px;line-height:15px;font-weight:500;white-space:nowrap">杨可的屏幕共享</div>
</div>

<!-- bottom toolbar -->
<div id="bstrip" class="a"></div>
<div id="toolbar" class="a"></div>
<div class="a" style="left:79px;top:483px;width:47px;height:39px;background:#eef0f3;border-radius:4px"></div>
<svg class="sv" style="left:0;top:479px" width="865" height="47" viewBox="0 0 865 47">
  <!-- mic muted -->
  <g fill="#3b3d42"><rect x="29" y="5" width="8" height="13" rx="4"/></g>
  <path d="M25 14a8 8 0 0 0 16 0M33 22v4M28 26h10" stroke="#3b3d42" stroke-width="2" fill="none"/>
  <path d="M24 25l19-18" stroke="#fff" stroke-width="3"/>
  <path d="M24 25l19-18" stroke="#f04a3e" stroke-width="1.6"/>
  <path d="M58 29l4-4l4 4" stroke="#333" stroke-width="1.6" fill="none"/>
  <!-- video muted -->
  <rect x="91.5" y="8" width="16" height="15" rx="2" fill="#3b3d42"/>
  <path d="M107 13l6.5-4v13l-6.5-4z" fill="#3b3d42"/>
  <path d="M92 24l20-18" stroke="#eef0f3" stroke-width="3"/>
  <path d="M92 24l20-18" stroke="#f04a3e" stroke-width="1.6"/>
  <path d="M128 29l4-4l4 4" stroke="#333" stroke-width="1.6" fill="none"/>
  <!-- share screen -->
  <rect x="236.5" y="9" width="20" height="13" rx="1" fill="#3b3d42" stroke="#22c35a" stroke-width="1.6"/>
  <path d="M242.5 19c0-4 3-6 7-6M248 11l2 2l-2 2" stroke="#fff" stroke-width="1.4" fill="none"/>
  <path d="M241 25.5h11" stroke="#3b3d42" stroke-width="2"/>
  <path d="M269 29l4-4l4 4" stroke="#333" stroke-width="1.6" fill="none"/>
  <!-- security shield -->
  <path d="M309 7l8 3v7c0 5-4 8-8 10c-4-2-8-5-8-10v-7z" fill="#3b3d42"/>
  <path d="M305 17l4-3l4 3M305 21l4-3l4 3" stroke="#fff" stroke-width="1.4" fill="none"/>
  <!-- invite -->
  <circle cx="357" cy="11" r="4.5" fill="#3b3d42"/>
  <path d="M348 27c0-6 4-9 9-9c3 0 5 1 7 3v6z" fill="#3b3d42"/>
  <circle cx="365" cy="23" r="5" fill="#3b3d42" stroke="#fff" stroke-width="1.2"/>
  <path d="M365 20.5v5M362.5 23h5" stroke="#fff" stroke-width="1.3"/>
  <!-- members -->
  <path d="M422.5 7.5a3.8 3.8 0 0 1 0 7" stroke="#3b3d42" stroke-width="1.1" fill="none"/>
  <path d="M426.5 16.5c2 1.5 3.5 4.5 3.5 8.5" stroke="#3b3d42" stroke-width="1.1" fill="none"/>
  <circle cx="419" cy="11" r="3.8" fill="#3b3d42" stroke="#fff" stroke-width="0.6"/>
  <path d="M410 25c0-6 3.5-9.5 9-9.5s9 3.5 9 9.5z" fill="#3b3d42" stroke="#fff" stroke-width="0.6"/>
  <!-- chat -->
  <path d="M471 8h18a1.5 1.5 0 0 1 1.5 1.5v12a1.5 1.5 0 0 1-1.5 1.5h-11l-4 4v-4h-3a1.5 1.5 0 0 1-1.5-1.5v-12a1.5 1.5 0 0 1 1.5-1.5z" fill="#3b3d42"/>
  <circle cx="475.5" cy="15.5" r="1.4" fill="#fff"/><circle cx="480" cy="15.5" r="1.4" fill="#fff"/><circle cx="484.5" cy="15.5" r="1.4" fill="#fff"/>
  <!-- record -->
  <circle cx="530" cy="16.5" r="10" fill="none" stroke="#3b3d42" stroke-width="1.5"/>
  <circle cx="530" cy="16.5" r="7.5" fill="#3b3d42"/>
  <path d="M552 29l4-4l4 4" stroke="#333" stroke-width="1.6" fill="none"/>
  <!-- apps -->
  <rect x="582" y="7" width="8" height="8" rx="1.5" fill="#3b3d42"/>
  <path d="M597 5.5l4.5 4.5l-4.5 4.5l-4.5-4.5z" fill="none" stroke="#3b3d42" stroke-width="1.4"/>
  <rect x="582" y="18" width="8" height="8" rx="1.5" fill="#3b3d42"/>
  <rect x="593" y="18" width="8" height="8" rx="1.5" fill="#3b3d42"/>
  <!-- settings gear -->
  <g transform="translate(642 16.5)" fill="#3b3d42">
    <circle r="7.5"/>
    <rect x="-2.2" y="-10" width="4.4" height="20" rx="1"/>
    <rect x="-2.2" y="-10" width="4.4" height="20" rx="1" transform="rotate(45)"/>
    <rect x="-2.2" y="-10" width="4.4" height="20" rx="1" transform="rotate(90)"/>
    <rect x="-2.2" y="-10" width="4.4" height="20" rx="1" transform="rotate(135)"/>
    <circle r="3" fill="#fff"/>
  </g>
</svg>
<div class="tbl" style="left:13px;width:40px">解除静音</div>
<div class="tbl" style="left:83px;width:40px">开启视频</div>
<div class="tbl" style="left:226px;width:40px">共享屏幕</div>
<div class="tbl" style="left:289px;width:40px">安全</div>
<div class="tbl" style="left:339px;width:40px">邀请</div>
<div class="tbl" style="left:388px;width:60px">管理成员(20)</div>
<div class="tbl" style="left:460px;width:40px">聊天</div>
<div class="tbl" style="left:510px;width:40px">录制</div>
<div class="tbl" style="left:571px;width:40px">应用</div>
<div class="tbl" style="left:622px;width:40px">设置</div>
<div class="a" style="left:784px;top:486px;width:71px;height:33px;border:1.3px solid #ff5e5a;border-radius:3px;color:#f5403c;font-size:13px;line-height:30px;text-align:center;white-space:nowrap">离开会议</div>

<!-- chat overlay -->
<div class="a" style="left:18px;top:384px;width:121px;height:26px;background:rgba(62,62,62,0.78);border-radius:4px"></div>
<svg class="sv" style="left:18px;top:384px" width="121" height="26" viewBox="0 0 121 26">
  <circle cx="13.5" cy="13" r="7.2" fill="#fff"/>
  <circle cx="11" cy="11" r="1" fill="#555"/><circle cx="16" cy="11" r="1" fill="#555"/>
  <path d="M9.5 14h8a4 4 0 0 1-8 0z" fill="#555"/>
  <path d="M26.5 4v17" stroke="#9a9a9a" stroke-width="0.8"/>
  <path d="M97.5 5v16" stroke="#888" stroke-width="1"/>
  <path d="M111.5 9l-4 4l4 4" stroke="#fff" stroke-width="1.6" fill="none"/>
</svg>
<div class="a" style="left:53px;top:389px;color:#e8e8e8;font-size:12px;line-height:16px;white-space:nowrap">说点什么...</div>

</body></html>
